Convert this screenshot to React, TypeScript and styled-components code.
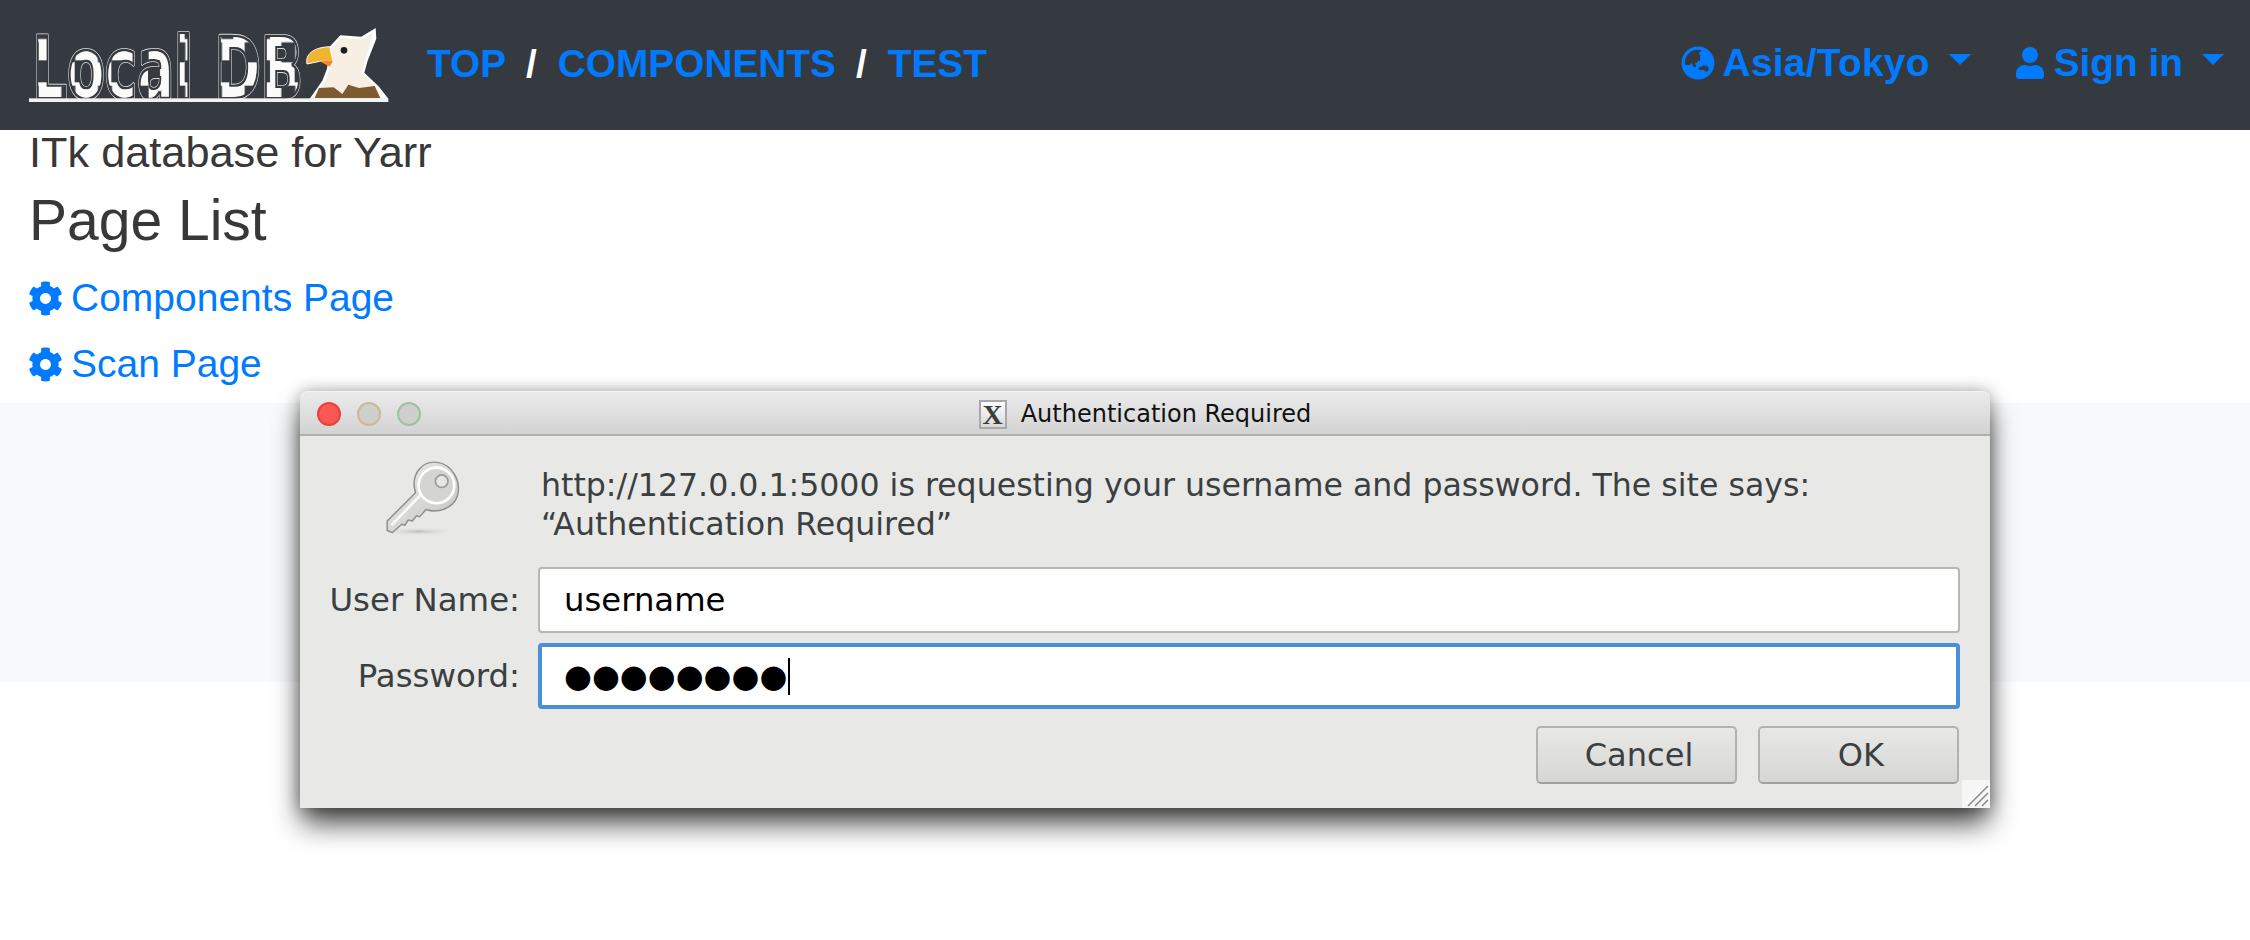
import React from "react";
import styled, { createGlobalStyle } from "styled-components";
import { FaCog, FaGlobeAsia, FaUser } from "react-icons/fa";

const GlobalStyle = createGlobalStyle`
  html, body {
    margin: 0;
    padding: 0;
    background: #fff;
    font-family: "Liberation Sans", Arial, sans-serif;
  }
`;

const Page = styled.div`
  position: relative;
  width: 2250px;
  height: 940px;
  overflow: hidden;
`;

const Navbar = styled.nav`
  height: 130px;
  background: #343a40;
  display: flex;
  align-items: center;
  padding: 0 26px 3px 29px;
  box-sizing: border-box;
`;

const Crumbs = styled.div`
  display: flex;
  align-items: center;
  margin-left: 38px;
  font-size: 38.8px;
  font-weight: bold;
`;

const NavLink = styled.a`
  color: #007bff;
  text-decoration: none;
`;

const Slash = styled.span`
  color: #fff;
  margin: 0 21px 0 20px;
`;

const NavRight = styled.div`
  margin-left: auto;
  padding-bottom: 2px;
  display: flex;
  align-items: center;
  color: #007bff;
  font-size: 38.8px;
  font-weight: bold;
`;

const Dropdown = styled.a<{ $gap: number; $icon: number }>`
  display: flex;
  align-items: center;
  gap: 8px;
  margin-left: ${(p) => p.$gap}px;
  svg {
    font-size: ${(p) => p.$icon}px;
  }
`;

const Zone = styled.span`
  letter-spacing: 0.3px;
`;

const Caret = styled.span`
  width: 0;
  height: 0;
  margin: 0 0 6px 11px;
  border-top: 11px solid #007bff;
  border-left: 11px solid transparent;
  border-right: 11px solid transparent;
`;

const Content = styled.main`
  padding: 0 29px;
  height: 273px;
  box-sizing: border-box;
  color: #383838;
`;

const Tagline = styled.div`
  font-size: 43.3px;
  line-height: 44px;
`;

const Title = styled.h3`
  margin: 14px 0 13px;
  font-size: 57px;
  line-height: 64px;
  font-weight: normal;
`;

const PageLink = styled.a`
  display: flex;
  align-items: center;
  gap: 8px;
  height: 66px;
  margin-left: -1px;
  color: #007bff;
  font-size: 39px;
  svg {
    font-size: 35px;
  }
`;

const Band = styled.div`
  height: 279px;
  background: #f8f9fa;
`;

const Dialog = styled.section`
  position: absolute;
  left: 300px;
  top: 391px;
  width: 1690px;
  height: 417px;
  box-sizing: border-box;
  border-radius: 8px 8px 0 0;
  background: #e8e8e7;
  font-family: "DejaVu Sans", sans-serif;
  color: #3a3f41;
  box-shadow: 0 17px 28px -2px rgba(0, 0, 0, 0.74), 0 0 16px rgba(0, 0, 0, 0.3);
  display: flex;
  flex-direction: column;
`;

const TitleBar = styled.header`
  position: relative;
  flex: none;
  height: 45px;
  box-sizing: border-box;
  padding-top: 2px;
  border-top: 1px solid #f4f4f4;
  border-bottom: 2px solid #b0b0ae;
  border-radius: 8px 8px 0 0;
  background: linear-gradient(#ebebeb, #d3d3d3);
  display: flex;
  align-items: center;
  justify-content: center;
  gap: 14px;
  color: #111;
  font-size: 24px;
`;

const Lights = styled.div`
  position: absolute;
  left: 17px;
  top: 10px;
  display: flex;
  gap: 16px;
`;

const Light = styled.span<{ $fill: string; $edge: string }>`
  width: 24px;
  height: 24px;
  box-sizing: border-box;
  border-radius: 50%;
  background: ${(p) => p.$fill};
  border: 2px solid ${(p) => p.$edge};
`;

const XIcon = styled.span`
  width: 28px;
  height: 29px;
  box-sizing: border-box;
  border: 2px solid #a8a8a8;
  background: linear-gradient(#fdfdfd, #d8d8d8);
  font-family: "Liberation Serif", serif;
  font-size: 28px;
  font-weight: bold;
  line-height: 25px;
  text-align: center;
  color: #3c3c3c;
`;

const Body = styled.div`
  flex: 1;
  display: flex;
  flex-direction: column;
  position: relative;
  padding: 0 30px 0 29px;
`;

const Message = styled.div`
  height: 131px;
  display: flex;
  align-items: flex-start;
`;

const KeySlot = styled.div`
  flex: none;
  width: 212px;
  padding: 20px 0 0 54px;
  box-sizing: border-box;
`;

const MessageText = styled.p`
  margin: 30px 0 0;
  font-size: 31.6px;
  line-height: 39px;
  white-space: nowrap;
`;

const Form = styled.div`
  display: grid;
  grid-template-columns: 191px 1fr;
  column-gap: 18px;
  row-gap: 10px;
  align-items: center;
`;

const Label = styled.label`
  text-align: right;
  font-size: 32.4px;
  white-space: nowrap;
`;

const Field = styled.div<{ $focus?: boolean }>`
  height: 66px;
  box-sizing: border-box;
  background: #fff;
  border-radius: 4px;
  border: ${(p) => (p.$focus ? "4px solid #4a90d9" : "2px solid #b6b6b3")};
  padding-left: ${(p) => (p.$focus ? 22 : 24)}px;
  display: flex;
  align-items: center;
  color: #000;
  font-size: 32.3px;
`;

const Dots = styled.span`
  font-size: 32px;
  line-height: 1;
`;

const TextCaret = styled.span`
  width: 2px;
  height: 37px;
  background: #000;
  margin-left: 1px;
`;

const Actions = styled.div`
  display: flex;
  justify-content: flex-end;
  gap: 21px;
  margin-top: 17px;
  padding-right: 1px;
`;

const Button = styled.button`
  width: 201px;
  height: 58px;
  box-sizing: border-box;
  border: 2px solid #b2b2af;
  border-bottom-color: #a0a09c;
  border-radius: 5px;
  background: linear-gradient(#e8e8e7, #d6d6d4);
  font-family: "DejaVu Sans", sans-serif;
  font-size: 32.1px;
  color: #3a3f41;
  padding: 0 0 0 5px;
`;

const Grip = styled.div`
  position: absolute;
  right: 0;
  bottom: 0;
  width: 28px;
  height: 28px;
  background: #f6f6f6;
`;

const LogoSvg = styled.svg`
  flex: none;
  overflow: visible;
  margin-top: 3px;
`;

const LogoMark = () => (
  <LogoSvg width={360} height={75} viewBox="88 70 1080 225" aria-label="LocalDB logo">
    <defs>
      <pattern id="patch" width="110" height="130" patternUnits="userSpaceOnUse" patternTransform="translate(8 40)">
        <rect width="110" height="130" fill="#fbfbfb" />
        <rect x="0" y="0" width="30" height="60" fill="#343a40" />
        <rect x="70" y="76" width="36" height="54" fill="#343a40" />
      </pattern>
      <filter id="inset" x="-10%" y="-10%" width="120%" height="120%">
        <feMorphology operator="erode" radius="1.5" />
      </filter>
      <filter id="insetDeep" x="-10%" y="-10%" width="120%" height="120%">
        <feMorphology operator="erode" radius="4" />
      </filter>
      <g id="logoLocal" fontFamily="'DejaVu Sans', sans-serif" fontWeight="bold" fontSize="258">
        <text x={98} y={279} textLength={482} lengthAdjust="spacingAndGlyphs">
          Local
        </text>
      </g>
      <g id="logoDb" fontFamily="'DejaVu Sans', sans-serif" fontWeight="bold" fontSize="258">
        <text x={645} y={279} textLength={265} lengthAdjust="spacingAndGlyphs">
          DB
        </text>
      </g>
    </defs>
    {["#logoLocal", "#logoDb"].map((id) => (
      <g key={id} strokeLinejoin="round">
        <use href={id} fill="#343a40" stroke="#dcdcdc" strokeWidth={12} />
        <use href={id} fill="#343a40" stroke="#343a40" strokeWidth={7} />
        <use href={id} fill="#343a40" filter="url(#inset)" />
        <use href={id} fill="url(#patch)" filter="url(#insetDeep)" />
      </g>
    ))}
    <rect x="88" y="281" width="1078" height="11" fill="#f2f2f2" />
    <path
      d="M930 282 L968 228 L982 192 L990 126 L1022 92 L1085 96 L1128 70 L1130 102 L1104 168 L1094 204 L1138 246 L1166 282 Z"
      fill="#fff"
    />
    <path
      d="M940 278 L976 228 L990 190 L996 130 L1026 100 L1085 104 L1120 84 L1098 166 L1086 206 L1134 252 L1145 278 Z"
      fill="#f8efe4"
    />
    <path d="M945 280 L958 250 L1002 248 L1028 268 L1046 240 L1078 250 L1125 244 L1142 280 Z" fill="#7d5a30" />
    <path d="M922 178 C916 150 940 128 990 126 L1000 170 L960 170 Z" fill="#f0b52e" stroke="#fff" strokeWidth="3" />
    <path d="M960 170 L1000 168 L990 186 Z" fill="#ed8a32" />
    <circle cx="1033" cy="137" r="10" fill="#1c1c1c" />
  </LogoSvg>
);

const KeyIcon = () => (
  <svg width={88} height={84} viewBox="0 0 84 80">
    <defs>
      <linearGradient id="keyBody" x1="0" y1="0" x2="1" y2="1">
        <stop offset="0" stopColor="#ececea" />
        <stop offset="1" stopColor="#c4c4c0" />
      </linearGradient>
      <radialGradient id="keyShade">
        <stop offset="0" stopColor="#bdbdbb" />
        <stop offset="1" stopColor="#e8e8e7" stopOpacity="0" />
      </radialGradient>
    </defs>
    <ellipse cx="34" cy="72" rx="36" ry="4" fill="url(#keyShade)" />
    <path
      d="M4 62 L4 71 L9 73 L18 65 L21 66 L24 61 L28 62 L32 57 L35 58 L41 51 C52 55 67 50 71 38 C75 24 66 8 52 6 C38 4 28 16 30 30 L31 35 Z"
      fill="url(#keyBody)"
      stroke="#8f8f8b"
      strokeWidth="1.4"
      strokeLinejoin="round"
    />
    <circle cx="51" cy="28" r="17" fill="#d4d4d1" stroke="#ffffff" strokeWidth="2.5" />
    <circle cx="56" cy="24" r="6" fill="#e6e6e4" stroke="#9a9a96" strokeWidth="1.6" />
    <path d="M8 66 L36 37" stroke="#fafafa" strokeWidth="2.5" />
  </svg>
);

const App: React.FC = () => {
  return (
    <Page>
      <GlobalStyle />
      <Navbar>
        <LogoMark />
        <Crumbs>
          <NavLink>TOP</NavLink>
          <Slash>/</Slash>
          <NavLink>COMPONENTS</NavLink>
          <Slash>/</Slash>
          <NavLink>TEST</NavLink>
        </Crumbs>
        <NavRight>
          <Dropdown $gap={0} $icon={34}>
            <FaGlobeAsia />
            <Zone>Asia/Tokyo</Zone>
            <Caret />
          </Dropdown>
          <Dropdown $gap={43} $icon={32}>
            <FaUser />
            <span>Sign in</span>
            <Caret />
          </Dropdown>
        </NavRight>
      </Navbar>
      <Content>
        <Tagline>ITk database for Yarr</Tagline>
        <Title>Page List</Title>
        <PageLink>
          <FaCog />
          Components Page
        </PageLink>
        <PageLink>
          <FaCog />
          Scan Page
        </PageLink>
      </Content>
      <Band />
      <Dialog>
        <TitleBar>
          <Lights>
            <Light $fill="#fc5753" $edge="#e5423e" />
            <Light $fill="#cfcfcd" $edge="#cdb892" />
            <Light $fill="#cfcfcd" $edge="#9cc2a0" />
          </Lights>
          <XIcon>X</XIcon>
          <span>Authentication Required</span>
        </TitleBar>
        <Body>
          <Message>
            <KeySlot>
              <KeyIcon />
            </KeySlot>
            <MessageText>
              http://127.0.0.1:5000 is requesting your username and password. The site says:
              <br />
              “Authentication Required”
            </MessageText>
          </Message>
          <Form>
            <Label>User Name:</Label>
            <Field>username</Field>
            <Label>Password:</Label>
            <Field $focus>
              <Dots>●●●●●●●●</Dots>
              <TextCaret />
            </Field>
          </Form>
          <Actions>
            <Button>Cancel</Button>
            <Button>OK</Button>
          </Actions>
          <Grip>
            <svg width={28} height={28} viewBox="0 0 28 28">
              <path d="M6 26 L26 6 M13 26 L26 13 M20 26 L26 20" stroke="#8a8a88" strokeWidth="1.5" />
            </svg>
          </Grip>
        </Body>
      </Dialog>
    </Page>
  );
};

export default App;
